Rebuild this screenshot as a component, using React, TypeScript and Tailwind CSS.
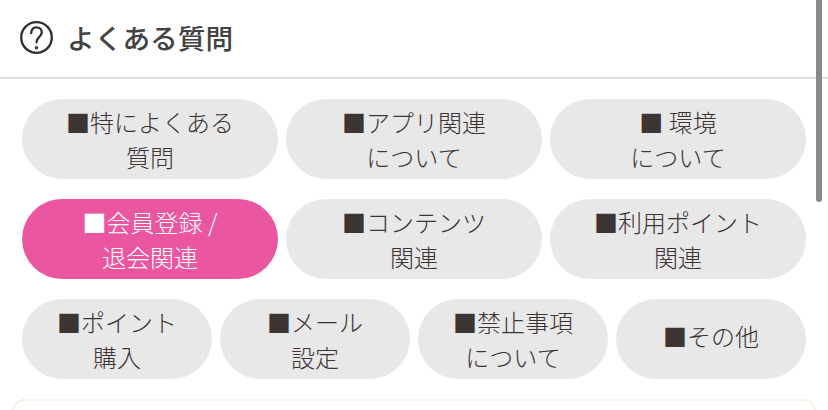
const sans = "font-['Noto_Sans_CJK_JP',sans-serif]";

function Pill({ a, b, active }: { a: string; b?: string; active?: boolean }) {
  return (
    <div
      className={
        "flex h-[80px] flex-1 flex-col items-center justify-center rounded-[40px] text-center text-[24px] leading-[35px] font-light " +
        (b ? "pb-[1px] " : "pb-[7px] ") +
        (active ? "bg-[#ea57a0] text-white" : "bg-[#e8e8e8] text-[#3d3434]")
      }
    >
      <span className="whitespace-nowrap">{a}</span>
      {b && <span className="whitespace-nowrap">{b}</span>}
    </div>
  );
}

export default function App() {
  return (
    <div className={"relative h-[410px] w-[828px] overflow-hidden bg-white " + sans}>
      <div className="flex h-[79px] items-center gap-[14px] border-b-2 border-[#dddddd] pb-[1px] pl-[20px]">
        <svg className="mb-[1px]" width="33" height="33" viewBox="0 0 33 33" fill="none" stroke="#2e2e2e" strokeWidth="2.3" strokeLinecap="round">
          <circle cx="16.5" cy="16.5" r="15.300" />
          <path d="M11.200 12.200c0-3.600 2.200-5.900 5.300-5.900 3.100 0 5.300 2.200 5.300 5 0 2.500-1.500 3.800-2.900 5-1.400 1.200-2.400 2.700-2.400 5" />
          <circle cx="16.500" cy="26.800" r="0.6" fill="#2e2e2e" />
        </svg>
        <span className="text-[27.7px] leading-none font-medium text-[#424242]">よくある質問</span>
      </div>

      <div className="flex flex-col gap-[20px] pt-[20px] pr-[22px] pl-[22px]">
        <div className="flex gap-[8px]">
          <Pill a="■特によくある" b="質問" />
          <Pill a="■アプリ関連" b="について" />
          <Pill a="■ 環境" b="について" />
        </div>
        <div className="flex gap-[8px]">
          <Pill a="■会員登録 /" b="退会関連" active />
          <Pill a="■コンテンツ" b="関連" />
          <Pill a="■利用ポイント" b="関連" />
        </div>
        <div className="flex gap-[8px]">
          <Pill a="■ポイント" b="購入" />
          <Pill a="■メール" b="設定" />
          <Pill a="■禁止事項" b="について" />
          <Pill a="■その他" />
        </div>
      </div>

      <div className="mx-[12px] mt-[20px] h-[40px] rounded-t-[12px] border-2 border-[#f5f1e6] bg-white" />

      <div className="absolute top-0 right-[6px] h-[202px] w-[6px] rounded-b-[3px] bg-[#888888]" />
    </div>
  );
}
